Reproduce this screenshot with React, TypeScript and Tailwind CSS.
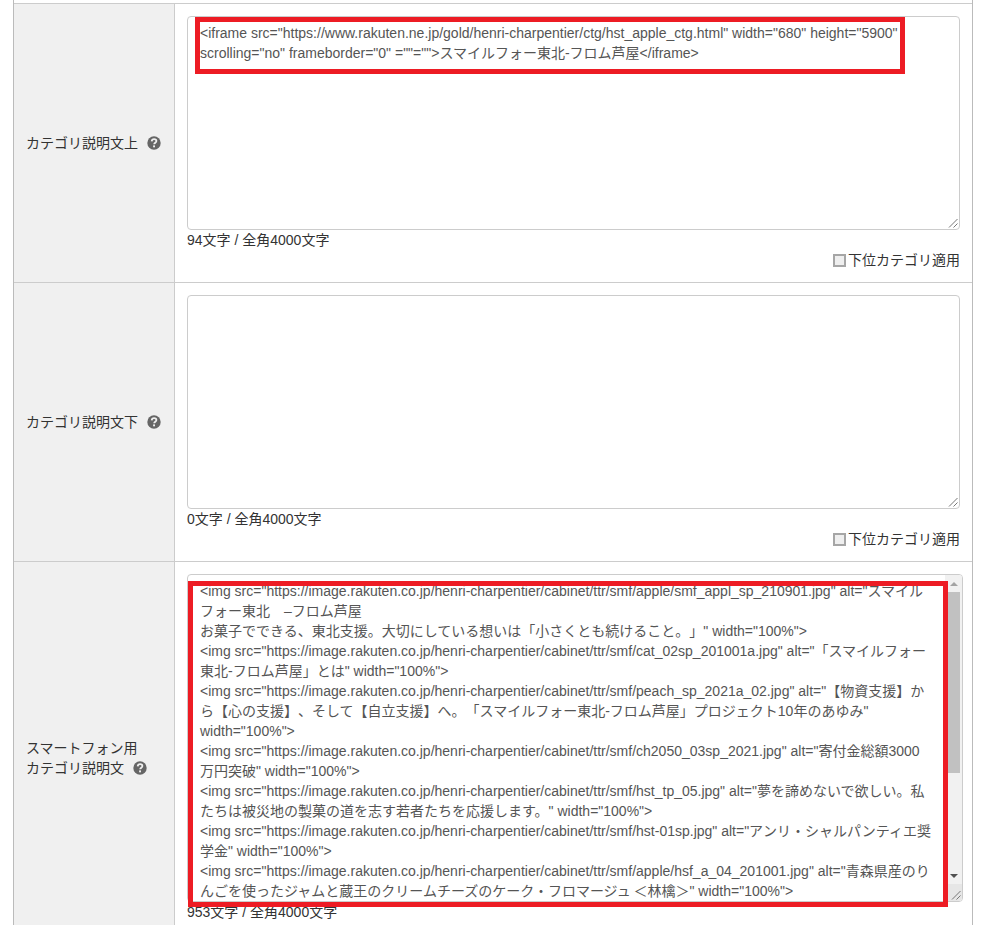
import React from 'react';

const latin = "font-['Liberation_Sans','Noto_Sans_CJK_JP',sans-serif]";

const HelpIcon = () => (
  <svg className="ml-[9px] inline-block h-[14px] w-[14px] align-[-2px]" viewBox="0 0 14 14">
    <circle cx="7" cy="7" r="6.7" fill="#666" />
    <path d="M4.7 5.4c.1-1.4 1.1-2.2 2.4-2.2 1.3 0 2.3.8 2.3 1.9 0 1.7-2.2 1.6-2.2 3.2" fill="none" stroke="#f0f0f0" strokeWidth="1.8" />
    <rect x="6.1" y="9.4" width="1.9" height="1.9" fill="#f0f0f0" />
  </svg>
);

const Apply = () => (
  <div className="flex h-5 items-center justify-end text-[#333]">
    <span className="mr-[2px] h-[13px] w-[13px] border-2 border-[#a6a6a6] bg-[#efefef]" />
    下位カテゴリ適用
  </div>
);

const Grip = () => (
  <svg className="absolute bottom-[1px] right-[1px] h-[10px] w-[10px]" viewBox="0 0 10 10">
    <path d="M1 9.5 9.5 1M5.5 9.5 9.5 5.5" stroke="#777" strokeWidth="1" fill="none" />
  </svg>
);

const Row = ({ label, children }: { label: React.ReactNode; children: React.ReactNode }) => (
  <div className="flex border-b border-[#ccc]">
    <div className="flex w-[161px] shrink-0 items-center border-r border-[#ccc] bg-[#f0f0f0] pl-3 pr-2 text-[#333]">
      <div>{label}</div>
    </div>
    <div className="min-w-0 flex-1 px-3 pb-3 pt-3">{children}</div>
  </div>
);

const Box = ({ lines }: { lines: string[] }) => (
  <div className="relative h-[214px] rounded-[4px] border border-[#ccc] bg-white px-3 py-1.5 text-[#555]">
    {lines.map((line) => (
      <div key={line} className="whitespace-pre">{line}</div>
    ))}
    <Grip />
  </div>
);

const phone = [
  '<img src="https://image.rakuten.co.jp/henri-charpentier/cabinet/ttr/smf/apple/smf_appl_sp_210901.jpg" alt="スマイル',
  'フォー東北\u3000–フロム芦屋',
  'お菓子でできる、東北支援。大切にしている想いは「小さくとも続けること。」" width="100%">',
  '<img src="https://image.rakuten.co.jp/henri-charpentier/cabinet/ttr/smf/cat_02sp_201001a.jpg" alt="「スマイルフォー',
  '東北-フロム芦屋」とは" width="100%">',
  '<img src="https://image.rakuten.co.jp/henri-charpentier/cabinet/ttr/smf/peach_sp_2021a_02.jpg" alt="【物資支援】か',
  'ら【心の支援】、そして【自立支援】へ。「スマイルフォー東北-フロム芦屋」プロジェクト10年のあゆみ"',
  'width="100%">',
  '<img src="https://image.rakuten.co.jp/henri-charpentier/cabinet/ttr/smf/ch2050_03sp_2021.jpg" alt="寄付金総額3000',
  '万円突破" width="100%">',
  '<img src="https://image.rakuten.co.jp/henri-charpentier/cabinet/ttr/smf/hst_tp_05.jpg" alt="夢を諦めないで欲しい。私',
  'たちは被災地の製菓の道を志す若者たちを応援します。" width="100%">',
  '<img src="https://image.rakuten.co.jp/henri-charpentier/cabinet/ttr/smf/hst-01sp.jpg" alt="アンリ・シャルパンティエ奨',
  '学金" width="100%">',
  '<img src="https://image.rakuten.co.jp/henri-charpentier/cabinet/ttr/smf/apple/hsf_a_04_201001.jpg" alt="青森県産のり',
  'んごを使ったジャムと蔵王のクリームチーズのケーク・フロマージュ\u2009＜林檎＞" width="100%">',
];

export default function App() {
  return (
    <div className={`relative h-[925px] overflow-hidden bg-white text-[14px] leading-5 [text-spacing-trim:space-all] ${latin}`}>
      <div className="ml-[13px] w-[960px] border-x border-[#bbb]">
        <div className="h-[4px] border-b border-[#ccc]" />

        <Row label={<>カテゴリ説明文上<HelpIcon /></>}>
          <Box lines={[
            '<iframe src="https://www.rakuten.ne.jp/gold/henri-charpentier/ctg/hst_apple_ctg.html" width="680" height="5900"',
            'scrolling="no" frameborder="0" =""="">スマイルフォー東北-フロム芦屋</iframe>',
          ]} />
          <div className="h-5 text-[#333]">94文字 / 全角4000文字</div>
          <Apply />
        </Row>

        <Row label={<>カテゴリ説明文下<HelpIcon /></>}>
          <Box lines={[]} />
          <div className="h-5 text-[#333]">0文字 / 全角4000文字</div>
          <Apply />
        </Row>

        <Row label={<>スマートフォン用<br />カテゴリ説明文<HelpIcon /></>}>
          <div className="relative -mr-[3px] flex h-[328px] overflow-hidden rounded-[4px] border border-[#ccc] bg-white text-[#555]">
            <div className="min-w-0 flex-1 overflow-hidden px-3 pt-[6px]">
              {phone.map((line) => (
                <div key={line} className="whitespace-pre">{line}</div>
              ))}
            </div>
            <div className="flex w-[17px] shrink-0 flex-col bg-[#f1f1f1]">
              <div className="flex h-[17px] items-center justify-center">
                <span className="h-0 w-0 border-x-[4px] border-b-[4px] border-x-transparent border-b-[#a3a3a3]" />
              </div>
              <div className="mr-[2px] h-[181px] bg-[#c1c1c1]" />
              <div className="flex-1" />
              <div className="flex h-[17px] items-center justify-center">
                <span className="h-0 w-0 border-x-[4px] border-t-[4px] border-x-transparent border-t-[#505050]" />
              </div>
              <div className="h-[17px] bg-[#e6e6e6]" />
            </div>
            <Grip />
          </div>
          <div className="h-5 text-[#333]">953文字 / 全角4000文字</div>
          <Apply />
        </Row>
      </div>

      <div className="absolute left-[195px] top-[17px] h-[57px] w-[710px] border-[5px] border-[#ed1c24]" />
      <div className="absolute left-[188px] top-[581px] h-[326px] w-[760px] border-[5px] border-[#ed1c24]" />
    </div>
  );
}
